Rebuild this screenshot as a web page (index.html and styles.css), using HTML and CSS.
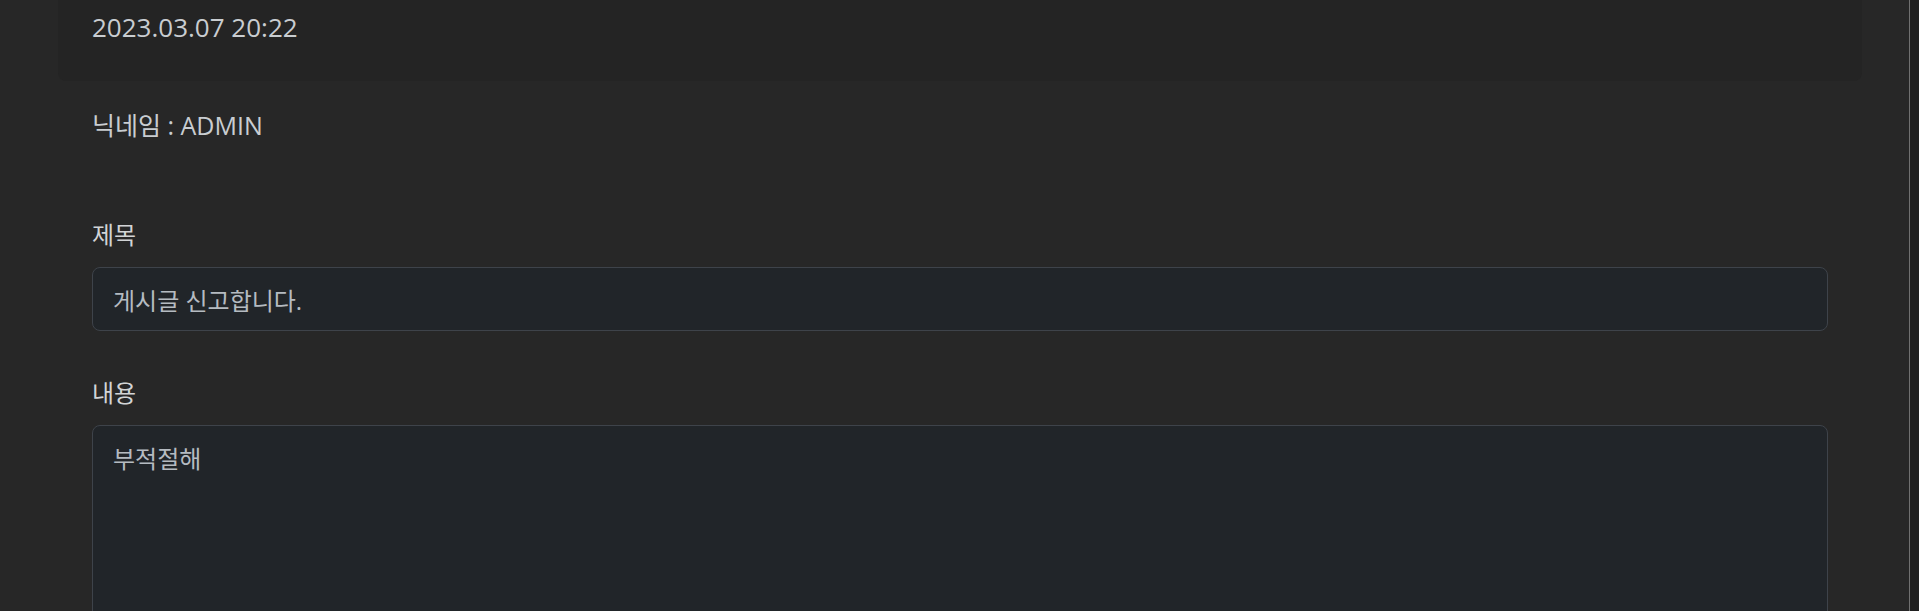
FILE: index.html
```html
<!DOCTYPE html>
<html lang="ko">
<head>
<meta charset="utf-8">
<title>신고</title>
<link rel="stylesheet" href="styles.css">
</head>
<body>
<div class="shell">
  <main class="main">
    <div class="wrap">
      <div class="card">
        <div class="date">2023.03.07 20:22</div>
      </div>
      <div class="body">
        <div class="nick">닉네임 : ADMIN</div>
        <form class="form">
          <div class="field">
            <label class="label" for="title">제목</label>
            <input class="control" id="title" type="text" value="게시글 신고합니다." readonly>
          </div>
          <div class="field">
            <label class="label" for="content">내용</label>
            <textarea class="control area" id="content" readonly>부적절해</textarea>
          </div>
        </form>
      </div>
    </div>
  </main>
  <div class="edge"></div>
</div>
</body>
</html>
```

FILE: styles.css
```css
html, body {
  margin: 0;
  padding: 0;
  height: 100%;
  overflow: hidden;
}
body {
  background: #272727;
  font-family: "Open Sans", "Noto Sans CJK KR", sans-serif;
  color: #c9cdd1;
}
.shell {
  display: flex;
  height: 100%;
}
.main {
  flex: 1;
  min-width: 0;
}
.edge {
  width: 9px;
  border-left: 1px solid #707070;
  background: #1f1f1f;
}
.wrap {
  width: 1804px;
  margin-left: 58px;
}
.card {
  background: #242424;
  padding: 8px 34px 34px;
  border-radius: 0 0 8px 8px;
}
.date {
  font-size: 26px;
  line-height: 39px;
}
.body {
  padding: 26px 34px 0;
}
.nick {
  font-size: 25px;
  line-height: 36px;
}
.form {
  margin-top: 75px;
}
.field + .field {
  margin-top: 45px;
}
.label {
  display: block;
  font-size: 24px;
  line-height: 33px;
  color: #d2d4d6;
  margin-bottom: 16px;
}
.control {
  display: block;
  box-sizing: border-box;
  width: 100%;
  height: 64px;
  margin: 0;
  padding: 10px 20px;
  font-family: "Open Sans", "Noto Sans CJK KR", sans-serif;
  font-size: 24px;
  line-height: 42px;
  color: #b5bbc1;
  background: #212529;
  border: 1px solid #3e434a;
  border-radius: 8px;
  outline: none;
}
.area {
  height: 260px;
  resize: none;
  padding-top: 12px;
}
```
